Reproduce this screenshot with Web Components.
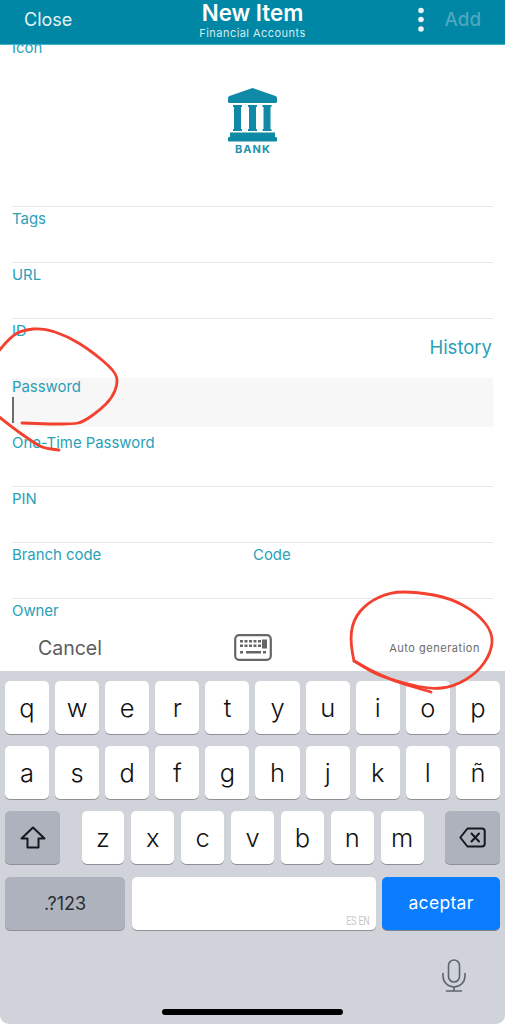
<!DOCTYPE html>
<html lang="en">
<head>
<meta charset="utf-8">
<title>New Item</title>
<style>
  html, body { margin: 0; height: 100%; background: #fff; }
  body { font-family: Inter, "Liberation Sans", sans-serif; }
</style>
</head>
<body>
<app-screen>
  <app-header></app-header>
  <item-form></item-form>
  <form-toolbar></form-toolbar>
  <ios-keyboard></ios-keyboard>
</app-screen>

<script>
class AppScreen extends HTMLElement {
  constructor() {
    super();
    this.attachShadow({ mode: "open" });
  }

  connectedCallback() {
    this.shadowRoot.innerHTML = `
      <style>
        :host {
          display: flex;
          flex-direction: column;
          position: relative;
          width: 505px;
          height: 1024px;
          overflow: hidden;
        }
      </style>
      <slot></slot>
      <red-marks></red-marks>
    `;
  }
}

class AppHeader extends HTMLElement {
  constructor() {
    super();
    this.attachShadow({ mode: "open" });
  }

  connectedCallback() {
    this.shadowRoot.innerHTML = `
      <style>
        :host {
          display: grid;
          grid-template-columns: 1fr auto 1fr;
          align-items: start;
          flex: none;
          position: relative;
          z-index: 1;
          height: 45px;
          box-sizing: border-box;
          padding: 0 24px;
          background: #0087a5;
          border-bottom: 1px solid #3eb4c8;
          color: #fff;
        }
        .close { font-size: 18px; line-height: 22px; margin-top: 9px; color: #e4f3f6; }
        .title { display: flex; flex-direction: column; align-items: center; }
        .title b { font-size: 22.3px; font-weight: 600; line-height: 26px; }
        .title span { font-size: 11px; line-height: 14px; letter-spacing: .45px; color: #d5ecf1; }
        .actions { display: flex; justify-content: flex-end; align-items: center; gap: 21px; height: 22px; margin-top: 9px; }
        .add { font-size: 18.8px; font-weight: 500; line-height: 22px; color: #4ea7bf; }
        svg { display: block; }
      </style>
      <div class="close">Close</div>
      <div class="title"><b>New Item</b><span>Financial Accounts</span></div>
      <div class="actions">
        <svg width="6" height="26" viewBox="0 0 6 26" fill="#e8f5f8">
          <circle cx="3" cy="3.5" r="2.8"/><circle cx="3" cy="12.5" r="2.8"/><circle cx="3" cy="22" r="2.8"/>
        </svg>
        <span class="add">Add</span>
      </div>
    `;
  }
}

class FormRow extends HTMLElement {
  constructor() {
    super();
    this.attachShadow({ mode: "open" });
  }

  connectedCallback() {
    this.shadowRoot.innerHTML = `
      <style>
        :host {
          display: block;
          flex: none;
          height: 56px;
          box-sizing: border-box;
          border-bottom: 1px solid #e6e6e6;
          font-size: 14.9px;
          line-height: 24px;
          color: #2a9fb8;
        }
        :host([plain]) { border-bottom: 0; }
        :host([active]) {
          height: 49px;
          margin: 3px 0 4px;
          border-bottom: 0;
          background: #f7f7f7;
          line-height: 18px;
        }
      </style>
      <slot></slot>
    `;
  }
}

class BankIcon extends HTMLElement {
  constructor() {
    super();
    this.attachShadow({ mode: "open" });
  }

  connectedCallback() {
    this.shadowRoot.innerHTML = `
      <style>
        :host { display: flex; flex-direction: column; align-items: center; color: #0f8aa6; }
        svg { display: block; }
        span { font-size: 11px; font-weight: 700; line-height: 13px; letter-spacing: 1.1px; margin: 1px -1px 0 0; color: #1d93ad; }
      </style>
      <svg width="49" height="54" viewBox="0 0 49 54" fill="currentColor">
        <path d="M24.5 0 L47.5 8 Q49 8.6 49 10 V13.5 Q49 15 47.5 15 H1.5 Q0 15 0 13.5 V10 Q0 8.6 1.5 8 Z"/>
        <path d="M5 17 H14 V19 H13 V41 H14 V43 H5 V41 H6 V19 H5 Z"/>
        <path d="M20 17 H29 V19 H28 V41 H29 V43 H20 V41 H21 V19 H20 Z"/>
        <path d="M34.5 17 H43.5 V19 H42.5 V41 H43.5 V43 H34.5 V41 H35.5 V19 H34.5 Z"/>
        <rect x="2" y="44.5" width="45" height="4.5"/>
        <rect x="0" y="49" width="49" height="4.5" rx="1.2"/>
      </svg>
      <span>BANK</span>
    `;
  }
}

class ItemForm extends HTMLElement {
  constructor() {
    super();
    this.attachShadow({ mode: "open" });
  }

  connectedCallback() {
    this.shadowRoot.innerHTML = `
      <style>
        :host {
          display: flex;
          flex-direction: column;
          flex: none;
          height: 582px;
          box-sizing: border-box;
          padding: 0 12px;
          overflow: hidden;
        }
        .icon-row { height: 171px; margin-top: -9px; }
        .icon-row bank-icon { margin-top: 28px; }
        .id { display: flex; justify-content: space-between; height: 100%; margin-right: 1px; }
        .history { font-size: 18.5px; line-height: 56px; }
        .two { display: grid; grid-template-columns: 241px 1fr; }
        .caret { width: 2px; height: 26px; margin-top: 1px; background: #6e6e6e; }
        .owner { height: 28px; border: 0; }
      </style>
      <form-row class="icon-row">Icon<bank-icon></bank-icon></form-row>
      <form-row>Tags</form-row>
      <form-row>URL</form-row>
      <form-row plain><div class="id"><span>ID</span><span class="history">History</span></div></form-row>
      <form-row active>Password<div class="caret"></div></form-row>
      <form-row>One-Time Password</form-row>
      <form-row>PIN</form-row>
      <form-row><div class="two"><span>Branch code</span><span>Code</span></div></form-row>
      <form-row plain class="owner">Owner</form-row>
    `;
  }
}

class FormToolbar extends HTMLElement {
  constructor() {
    super();
    this.attachShadow({ mode: "open" });
  }

  connectedCallback() {
    this.shadowRoot.innerHTML = `
      <style>
        :host {
          display: grid;
          grid-template-columns: 1fr auto 1fr;
          align-items: center;
          flex: none;
          height: 44px;
          box-sizing: border-box;
          padding: 0 25px 3px;
          background: #fff;
        }
        .cancel { font-size: 19.5px; color: #5c5c5c; margin-left: 13px; }
        .auto { justify-self: end; font-size: 11px; letter-spacing: .52px; color: #6b6b6b; }
        svg { display: block; }
      </style>
      <span class="cancel">Cancel</span>
      <svg width="38" height="27" viewBox="0 0 38 27">
        <rect x="1.2" y="1.2" width="35.6" height="24.6" rx="4" fill="none" stroke="#666" stroke-width="2.2"/>
        <g fill="#666">
          <rect x="6" y="6" width="3" height="2.5"/><rect x="10.5" y="6" width="3" height="2.5"/><rect x="15" y="6" width="3" height="2.5"/><rect x="19.5" y="6" width="3" height="2.5"/><rect x="24" y="6" width="3" height="2.5"/>
          <rect x="6" y="10.5" width="3" height="2.5"/><rect x="10.5" y="10.5" width="3" height="2.5"/><rect x="15" y="10.5" width="3" height="2.5"/><rect x="19.5" y="10.5" width="3" height="2.5"/><rect x="24" y="10.5" width="3" height="2.5"/>
          <rect x="28" y="5.5" width="5" height="9"/>
          <rect x="6" y="17" width="3" height="2.5"/><rect x="12" y="17" width="15" height="2.5"/><rect x="29" y="17" width="3" height="2.5"/>
        </g>
      </svg>
      <span class="auto">Auto generation</span>
    `;
  }
}

class KeyCap extends HTMLElement {
  constructor() {
    super();
    this.attachShadow({ mode: "open" });
  }

  connectedCallback() {
    this.shadowRoot.innerHTML = `
      <style>
        :host {
          display: flex;
          align-items: center;
          justify-content: center;
          position: relative;
          height: 53px;
          min-width: 0;
          border-radius: 5px;
          background: #fff;
          box-shadow: 0 1px 0 #8e9096;
          font-size: 25.5px;
          font-weight: 300;
          color: #111;
        }
        :host([kind="mod"]) { background: #adb2bc; font-size: 18px; font-weight: 400; color: #2b2e33; }
        :host([kind="go"]) { background: #0a7cff; box-shadow: 0 1px 0 #7d8694; font-size: 17.5px; font-weight: 400; letter-spacing: .3px; color: #fff; padding-bottom: 1px; box-sizing: border-box; }
      </style>
      <slot></slot>
    `;
  }
}

class IosKeyboard extends HTMLElement {
  constructor() {
    super();
    this.attachShadow({ mode: "open" });
  }

  keys(text) {
    return [...text].map((k) => `<key-cap>${k}</key-cap>`).join("");
  }

  connectedCallback() {
    this.shadowRoot.innerHTML = `
      <style>
        :host {
          display: flex;
          flex-direction: column;
          flex: 1;
          gap: 12.4px;
          box-sizing: border-box;
          padding: 9.5px 5px 0;
          background: #d0d3da;
          border-radius: 0 0 9px 9px;
          position: relative;
        }
        .row { display: grid; grid-template-columns: repeat(10, 1fr); gap: 6px; }
        .row3 { display: grid; grid-template-columns: 55px 342px 55px; justify-content: space-between; }
        .letters { display: grid; grid-template-columns: repeat(7, 1fr); gap: 7px; }
        .row4 { display: grid; grid-template-columns: 120px 1fr 118px; gap: 6.5px; }
        .lang {
          position: absolute;
          right: 6px;
          bottom: 3px;
          font: 12.5px/13px Roboto, sans-serif;
          letter-spacing: -.2px;
          color: #c9c9c9;
          transform: scaleX(.72);
          transform-origin: right center;
        }
        .bottom { display: flex; justify-content: flex-end; padding: 17px 34px 0 0; }
        .home {
          position: absolute;
          left: 162px;
          bottom: 9.5px;
          width: 181px;
          height: 6px;
          border-radius: 3px;
          background: #000;
        }
        svg { display: block; }
      </style>
      <div class="row">${this.keys("qwertyuiop")}</div>
      <div class="row">${this.keys("asdfghjklñ")}</div>
      <div class="row3">
        <key-cap kind="mod">
          <svg width="26" height="23" viewBox="0 0 26 23" fill="none" stroke="#16181c" stroke-width="2" stroke-linejoin="round">
            <path d="M13 1.5 L24.5 12.5 H18.5 V21.5 H7.5 V12.5 H1.5 Z"/>
          </svg>
        </key-cap>
        <div class="letters">${this.keys("zxcvbnm")}</div>
        <key-cap kind="mod">
          <svg width="27" height="21" viewBox="0 0 27 21" fill="none" stroke="#16181c" stroke-width="2" stroke-linejoin="round" stroke-linecap="round">
            <path d="M1.3 10.5 L8.5 1.5 H23 Q25.7 1.5 25.7 4.2 V16.8 Q25.7 19.5 23 19.5 H8.5 Z"/>
            <path d="M12.5 6.5 L20 14.5 M20 6.5 L12.5 14.5"/>
          </svg>
        </key-cap>
      </div>
      <div class="row4">
        <key-cap kind="mod">.?123</key-cap>
        <key-cap><span class="lang">ES EN</span></key-cap>
        <key-cap kind="go">aceptar</key-cap>
      </div>
      <div class="bottom">
        <svg width="24" height="33" viewBox="0 0 24 33" fill="none" stroke="#5d646e" stroke-width="1.6" stroke-linecap="round">
          <rect x="6.5" y="1" width="11" height="22" rx="5.5"/>
          <path d="M1 14.5 V17 A11 11 0 0 0 23 17 V14.5"/>
          <path d="M12 28 V32 M4.5 32 H19.5"/>
        </svg>
      </div>
      <div class="home"></div>
    `;
  }
}

class RedMarks extends HTMLElement {
  constructor() {
    super();
    this.attachShadow({ mode: "open" });
  }

  // quadratic curve through the midpoints, so hand drawn points come out smooth
  smooth(pts) {
    let d = `M${pts[0][0]} ${pts[0][1]}`;
    for (let i = 1; i < pts.length - 1; i++) {
      const mx = (pts[i][0] + pts[i + 1][0]) / 2;
      const my = (pts[i][1] + pts[i + 1][1]) / 2;
      d += ` Q${pts[i][0]} ${pts[i][1]} ${mx} ${my}`;
    }
    const last = pts[pts.length - 1];
    return `${d} L${last[0]} ${last[1]}`;
  }

  connectedCallback() {
    const strokes = [
      [[-2, 352], [10, 337], [23, 330], [43, 328], [67, 336], [90, 350], [115, 371], [118, 383], [112, 398], [100, 410], [83, 422], [73, 424], [50, 424], [22, 423]],
      [[-2, 416], [13, 428], [33, 442], [43, 448], [59, 450]],
      [[354, 661], [350, 643], [353, 620], [367, 603], [390, 592], [417, 592], [450, 598], [477, 613], [493, 633], [491, 653], [477, 673], [453, 687], [430, 689], [407, 684], [377, 675], [356, 662]],
      [[354, 661], [383, 678], [431, 692]],
    ];
    const paths = strokes.map((s) => `<path d="${this.smooth(s)}"/>`).join("");
    this.shadowRoot.innerHTML = `
      <style>
        :host { position: absolute; inset: 0; z-index: 2; pointer-events: none; }
        svg { display: block; }
      </style>
      <svg width="505" height="1024" viewBox="0 0 505 1024" fill="none" stroke="#f4402f" stroke-width="2.8" stroke-linecap="round" stroke-linejoin="round">${paths}</svg>
    `;
  }
}

customElements.define("app-screen", AppScreen);
customElements.define("app-header", AppHeader);
customElements.define("form-row", FormRow);
customElements.define("bank-icon", BankIcon);
customElements.define("item-form", ItemForm);
customElements.define("form-toolbar", FormToolbar);
customElements.define("key-cap", KeyCap);
customElements.define("ios-keyboard", IosKeyboard);
customElements.define("red-marks", RedMarks);
</script>
</body>
</html>
